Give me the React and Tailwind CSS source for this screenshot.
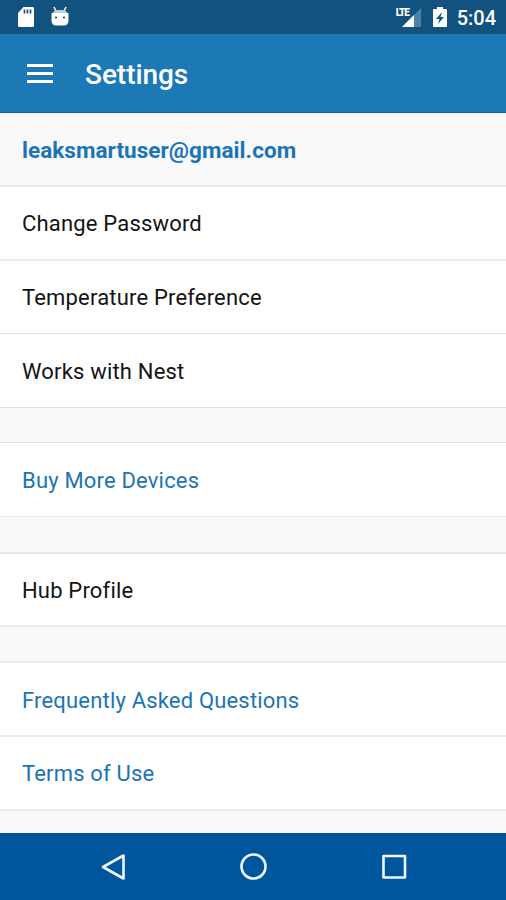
import React from 'react'

// Each group is a white block of rows, groups are separated by a grey gap
const groups = [
  [
    { label: 'Change Password', className: 'h-[74px] border-b-2 border-[#ebebeb]' },
    { label: 'Temperature Preference', className: 'h-[73px] border-b border-[#e2e2e2]' },
    { label: 'Works with Nest', className: 'h-[73px] pt-px' },
  ],
  [{ label: 'Buy More Devices', link: true, className: 'h-[73px] pt-[2px]' }],
  [{ label: 'Hub Profile', className: 'h-[71px] pt-[2px]' }],
  [
    { label: 'Frequently Asked Questions', link: true, className: 'h-[74px] border-b-2 border-[#ebebeb] pt-[2px]' },
    { label: 'Terms of Use', link: true, className: 'h-[72px] pt-px' },
  ],
]

const gaps = [
  'h-9 border-y border-[#e2e2e2]',
  'h-[38px] border-t border-b-2 border-[#e8e8e8]',
  'h-[38px] border-y-2 border-[#ededed]',
  'h-6 border-t-2 border-[#ebebeb]',
]

function StatusBar() {
  return (
    <div className="flex h-[34px] items-center bg-[#12527f] text-white">
      <svg className="ml-[17px] h-[22px] w-[18px]" viewBox="0 0 18 22">
        <path d="M6.5 1h9A1.5 1.5 0 0 1 17 2.5v17a1.5 1.5 0 0 1-1.5 1.5h-13A1.5 1.5 0 0 1 1 19.5V7z" fill="#fff" />
        <path d="M7.5 3.5v4M10.5 3.5v4M13.5 3.5v4" stroke="#12527f" strokeWidth="1.7" />
      </svg>
      <svg className="ml-[15px] h-[22px] w-[20px]" viewBox="0 0 20 22">
        <path d="M4 1l2 4M16 1l-2 4" stroke="#fff" strokeWidth="1.5" />
        <path d="M5 4h10l2.5 3H2.5z" fill="#b9d0de" />
        <path d="M1.5 7h17v8a4.5 4.5 0 0 1-4.5 4.5H6A4.5 4.5 0 0 1 1.5 15z" fill="#fff" />
        <circle cx="6" cy="11.5" r="1.1" fill="#12527f" />
        <circle cx="14" cy="11.5" r="1.1" fill="#12527f" />
      </svg>
      <div className="relative ml-auto h-[22px] w-[28px]">
        <svg className="h-[22px] w-[28px]" viewBox="0 0 28 22">
          <path d="M26 2v19H7z" fill="#50809f" />
          <path d="M19 9v12H7z" fill="#fff" />
        </svg>
        <span className="absolute top-[1px] left-px text-[10px] leading-[11px] font-black tracking-[-1.1px]">LTE</span>
      </div>
      <svg className="ml-[9px] h-[22px] w-[16px]" viewBox="0 0 16 22">
        <path d="M5 1h6v2h3a1 1 0 0 1 1 1v16a1 1 0 0 1-1 1H2a1 1 0 0 1-1-1V4a1 1 0 0 1 1-1h3z" fill="#fff" />
        <path d="M10 6l-6 7h3.5L6 18l6-7H8.5z" fill="#12527f" />
      </svg>
      <span className="mr-[10px] ml-[9px] pt-[2px] text-[20px] leading-[22px] font-medium">5:04</span>
    </div>
  )
}

function Header() {
  return (
    <div className="flex h-[79px] items-center border-b border-[#1168a8] bg-[#1c79b6] text-white">
      <div className="ml-[27px] flex w-[26px] flex-col gap-[5px] pt-px">
        <div className="h-[3px] bg-white" />
        <div className="h-[3px] bg-white" />
        <div className="h-[3px] bg-white" />
      </div>
      <h1 className="ml-8 pt-1 text-[28px] leading-8 font-medium tracking-[-0.05px]">Settings</h1>
    </div>
  )
}

function Row({ label, link, className }) {
  return (
    <div className={`flex items-center bg-white pl-[22px] text-[22px] tracking-[0.18px] ${link ? 'text-[#1b74b5]' : 'text-[#141414]'} ${className}`}>
      {label}
    </div>
  )
}

function NavBar() {
  return (
    <div className="flex h-[67px] items-center bg-[#00569c]">
      <svg className="ml-[100px] h-7 w-7" viewBox="0 0 28 28" fill="none" stroke="#eef6ff" strokeWidth="2.6" strokeLinejoin="round">
        <path d="M3 14L23.5 2.5v23z" />
      </svg>
      <svg className="ml-[111px] h-[30px] w-[30px]" viewBox="0 0 30 30" fill="none" stroke="#eef6ff" strokeWidth="2.6">
        <circle cx="14.5" cy="14.5" r="12" />
      </svg>
      <svg className="ml-[111px] h-7 w-7" viewBox="0 0 28 28" fill="none" stroke="#eef6ff" strokeWidth="2.6" strokeLinejoin="round">
        <rect x="3.5" y="3" width="21.5" height="21.5" />
      </svg>
    </div>
  )
}

function App() {
  return (
    <div className="flex h-[900px] w-[506px] flex-col overflow-hidden bg-[#f9f9f9] font-[Roboto,sans-serif]">
      <StatusBar />
      <Header />
      <div className="flex h-[74px] items-center border-b-2 border-[#e9e9e9] pt-[3px] pl-[22px] text-[22.5px] font-bold tracking-[0.05px] text-[#1b74b5]">
        leaksmartuser@gmail.com
      </div>
      {groups.map((rows, i) => (
        <React.Fragment key={i}>
          {rows.map((row) => (
            <Row key={row.label} {...row} />
          ))}
          <div className={gaps[i]} />
        </React.Fragment>
      ))}
      <NavBar />
    </div>
  )
}

export default App
